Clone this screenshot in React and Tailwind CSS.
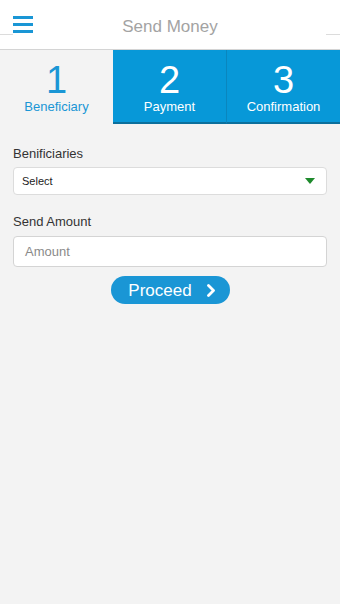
import React from 'react';

const Tab = ({ num, label, active, last }) => (
    <div
        className={
            active
                ? 'flex-1 flex flex-col items-center pt-[10px] bg-[#f3f3f3] text-[#1a96d5]'
                : `flex-1 flex flex-col items-center pt-[10px] bg-[#0798d8] text-white border-b-2 border-[#0b6f9c] ${last ? '' : 'border-r border-r-[#0a86be]'}`
        }
    >
        <span className="text-[38px] leading-[40px]">{num}</span>
        <span className="text-[13px] leading-[16px] -mt-[1px]">{label}</span>
    </div>
);

export default function App() {
    return (
        <div className="w-[340px] h-[604px] bg-[#f3f3f3] flex flex-col font-['Liberation_Sans',Arial,sans-serif]">
            {/* header */}
            <div className="h-[50px] bg-white relative flex items-center justify-center border-b border-[#d4d4d4]">
                <div className="absolute left-[13px] top-[16px] flex flex-col gap-[4.5px]">
                    <span className="block w-[20px] h-[2.5px] bg-[#1a96d5]" />
                    <span className="block w-[20px] h-[2.5px] bg-[#1a96d5]" />
                    <span className="block w-[20px] h-[2.5px] bg-[#1a96d5]" />
                </div>
                <span className="text-[17px] text-[#a3a3a3] mt-[4px]">Send Money</span>
                <span className="absolute left-0 top-[34px] w-[13px] h-px bg-[#dcdcdc]" />
                <span className="absolute right-0 top-[34px] w-[14px] h-px bg-[#dcdcdc]" />
            </div>

            {/* steps */}
            <div className="flex h-[74px]">
                <Tab num="1" label="Beneficiary" active />
                <Tab num="2" label="Payment" />
                <Tab num="3" label="Confirmation" last />
            </div>

            {/* form */}
            <div className="px-[13px] pt-[22px] flex flex-col">
                <label className="text-[13px] text-[#333] leading-[16px]">Benificiaries</label>
                <div className="mt-[5px] h-[28px] bg-white border border-[#dcdcdc] rounded-[4px] flex items-center justify-between pl-[8px] pr-[11px]">
                    <span className="text-[11px] text-[#222]">Select</span>
                    <svg width="10" height="6" viewBox="0 0 10 6">
                        <path d="M0 0h10L5 6z" fill="#1e8a2c" />
                    </svg>
                </div>

                <label className="mt-[19px] text-[13px] text-[#333] leading-[16px]">Send Amount</label>
                <div className="mt-[6px] h-[31px] bg-white border border-[#d4d4d4] rounded-[4px] flex items-center pl-[11px]">
                    <span className="text-[13px] text-[#8a8a8a]">Amount</span>
                </div>

                <div className="flex justify-center mt-[9px]">
                    <button className="w-[119px] h-[28px] rounded-full bg-[#1a96d5] text-white flex items-center justify-center gap-[15px] pl-[4px]">
                        <span className="text-[17px] leading-none">Proceed</span>
                        <svg width="9" height="13" viewBox="0 0 9 13">
                            <path d="M1.5 1.5l5 5-5 5" fill="none" stroke="white" strokeWidth="2.8" strokeLinecap="round" strokeLinejoin="round" />
                        </svg>
                    </button>
                </div>
            </div>
        </div>
    );
}
